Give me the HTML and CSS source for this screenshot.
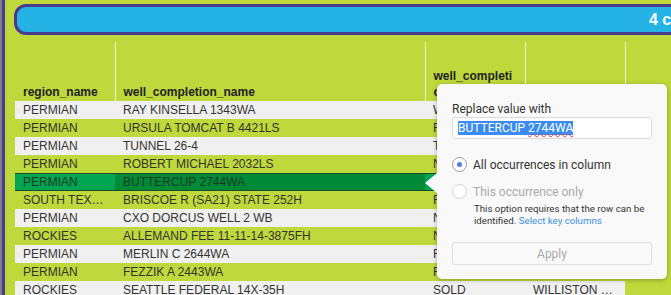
FILE: index.html
```html
<!DOCTYPE html>
<html lang="en">
<head>
  <meta charset="UTF-8">
  <title>Replace value</title>
  <link rel="stylesheet" href="styles.css">
</head>
<body>
  <div class="app">
    <div class="rail"></div>
    <div class="main">
      <div class="sel-bar">
        <span class="sel-mark"></span>
        <span class="sel-label">4 columns selected</span>
      </div>

      <table class="grid">
        <colgroup>
          <col class="c1"><col class="c2"><col class="c3"><col class="c4">
        </colgroup>
        <thead>
          <tr>
            <th>region_name</th>
            <th>well_completion_name</th>
            <th class="wrap">well_completion_status</th>
            <th>basin_name</th>
          </tr>
        </thead>
        <tbody>
          <tr class="odd"><td>PERMIAN</td><td>RAY KINSELLA 1343WA</td><td>WAITING ON COMPLETION</td><td>DELAWARE</td></tr>
          <tr><td>PERMIAN</td><td>URSULA TOMCAT B 4421LS</td><td>FLOWING</td><td>MIDLAND</td></tr>
          <tr class="odd"><td>PERMIAN</td><td>TUNNEL 26-4</td><td>TA</td><td>DELAWARE</td></tr>
          <tr><td>PERMIAN</td><td>ROBERT MICHAEL 2032LS</td><td>NEW</td><td>MIDLAND</td></tr>
          <tr class="selected"><td>PERMIAN</td><td class="focus">BUTTERCUP 2744WA</td><td>FLOWING</td><td>DELAWARE</td></tr>
          <tr><td>SOUTH TEXAS</td><td>BRISCOE R (SA21) STATE 252H</td><td>FLOWING</td><td>EAGLE FORD</td></tr>
          <tr class="odd"><td>PERMIAN</td><td>CXO DORCUS WELL 2 WB</td><td>NEW</td><td>DELAWARE</td></tr>
          <tr><td>ROCKIES</td><td>ALLEMAND FEE 11-11-14-3875FH</td><td>NEW</td><td>POWDER RIVER</td></tr>
          <tr class="odd"><td>PERMIAN</td><td>MERLIN C 2644WA</td><td>FLOWING</td><td>DELAWARE</td></tr>
          <tr><td>PERMIAN</td><td>FEZZIK A 2443WA</td><td>FLOWING</td><td>DELAWARE</td></tr>
          <tr class="odd"><td>ROCKIES</td><td>SEATTLE FEDERAL 14X-35H</td><td>SOLD</td><td>WILLISTON BASIN</td></tr>
        </tbody>
      </table>
    </div>
  </div>

  <div class="popover">
    <div class="pop-title">Replace value with</div>
    <div class="pop-input"><span class="picked"><span>BUTTERCUP </span><span class="typo">2744WA</span></span></div>

    <div class="radio-row on">
      <span class="radio"></span>
      <span>All occurrences in column</span>
    </div>
    <div class="radio-row off">
      <span class="radio"></span>
      <span>This occurrence only</span>
    </div>
    <p class="pop-note">This option requires that the row can be identified. <a href="#">Select key columns</a></p>

    <button class="pop-apply" disabled>Apply</button>
  </div>
</body>
</html>
```

FILE: styles.css
```css
body {
  margin: 0;
  background: #bfd83b;
  font-family: "Liberation Sans", Arial, sans-serif;
  color: #333;
  overflow: hidden;
}

.app {
  display: flex;
  height: 295px;
}

.rail {
  width: 3px;
  flex-shrink: 0;
  background: #4a3b8c;
  border-left: 2px solid #7e7c8e;
}

.main {
  flex: 1;
  padding: 4px 0 0 9px;
  overflow: hidden;
}

.sel-bar {
  display: flex;
  align-items: center;
  box-sizing: border-box;
  width: 720px;
  height: 31px;
  background: #25b3e6;
  border: 3px solid #4a3b8c;
  border-radius: 12px;
  padding-left: 3px;
}

.sel-mark {
  width: 4px;
  height: 15px;
  background: #f47c5c;
}

.sel-label {
  margin-left: 629px;
  color: white;
  font-weight: bold;
  font-size: 16px;
  white-space: nowrap;
}

.grid {
  margin: 7px 0 0 1px;
  border-collapse: collapse;
  table-layout: fixed;
  width: 610px;
  font-size: 12px;
}

.c1 { width: 100px; }
.c2 { width: 310px; }
.c3 { width: 100px; }
.c4 { width: 100px; }

.grid th {
  height: 59px;
  box-sizing: border-box;
  vertical-align: bottom;
  text-align: left;
  padding: 0 8px 1px;
  line-height: 16px;
  color: #222;
  white-space: nowrap;
  overflow: hidden;
}

.grid th + th {
  border-left: 1px solid #eef2d8;
}

.grid th:last-child {
  border-right: 1px solid #eef2d8;
}

.grid th.wrap {
  white-space: normal;
  word-break: break-all;
}

.grid td {
  height: 18px;
  padding: 0 8px;
  line-height: 18px;
  white-space: nowrap;
  overflow: hidden;
  text-overflow: ellipsis;
}

.grid tr.odd td {
  background: #f0f0f0;
}

.grid tr.selected td {
  background: #00a651;
  color: #173a22;
  box-shadow: inset 0 1px 0 #1d4a2a, inset 0 -1px 0 #1d4a2a;
}

.grid tr.selected td.focus {
  background: #008a38;
}

.popover {
  position: absolute;
  left: 437px;
  top: 84px;
  width: 230px;
  height: 195px;
  box-sizing: border-box;
  padding: 18px 15px 0 15px;
  background: #f9f9f9;
  border-radius: 5px;
  box-shadow: 0 1px 4px rgba(0, 0, 0, 0.3);
  font-family: Roboto, "Liberation Sans", sans-serif;
  font-size: 12px;
  color: #333;
}

.popover::before {
  content: "";
  position: absolute;
  left: -12px;
  top: 89px;
  border-right: 12px solid #f9f9f9;
  border-top: 10px solid transparent;
  border-bottom: 10px solid transparent;
}

.pop-title {
  line-height: 14px;
}

.pop-input {
  margin-top: 1px;
  height: 22px;
  box-sizing: border-box;
  border: 1px solid #d9d9d9;
  border-radius: 3px;
  background: #fff;
  padding: 4px 5px;
  line-height: 12px;
}

.picked {
  background: #3b8cf0;
  color: #fff;
}

.typo {
  text-decoration: underline wavy #e23b3b;
  text-decoration-thickness: 1px;
  text-underline-offset: 1px;
}

.radio-row {
  display: flex;
  align-items: center;
  gap: 6px;
  margin-top: 18px;
  line-height: 14px;
}

.radio-row + .radio-row {
  margin-top: 12px;
}

.radio {
  width: 13px;
  height: 13px;
  border: 1px solid #9a9a9a;
  border-radius: 50%;
  background: #fff;
  display: flex;
  align-items: center;
  justify-content: center;
}

.radio-row.on .radio::after {
  content: "";
  width: 5px;
  height: 5px;
  border-radius: 50%;
  background: #4b7bec;
}

.radio-row.off {
  color: #aaa;
}

.radio-row.off .radio {
  border-color: #d2d2d2;
}

.pop-note {
  margin: 4px 0 0 22px;
  font-size: 9.7px;
  line-height: 12px;
  color: #333;
}

.pop-note a {
  color: #3b8fe0;
  text-decoration: none;
}

.pop-apply {
  display: block;
  width: 100%;
  height: 23px;
  margin-top: 15px;
  border: 1px solid #dedede;
  border-radius: 3px;
  background: #f9f9f9;
  color: #aaa;
  font-family: Roboto, "Liberation Sans", sans-serif;
  font-size: 12px;
}
```
